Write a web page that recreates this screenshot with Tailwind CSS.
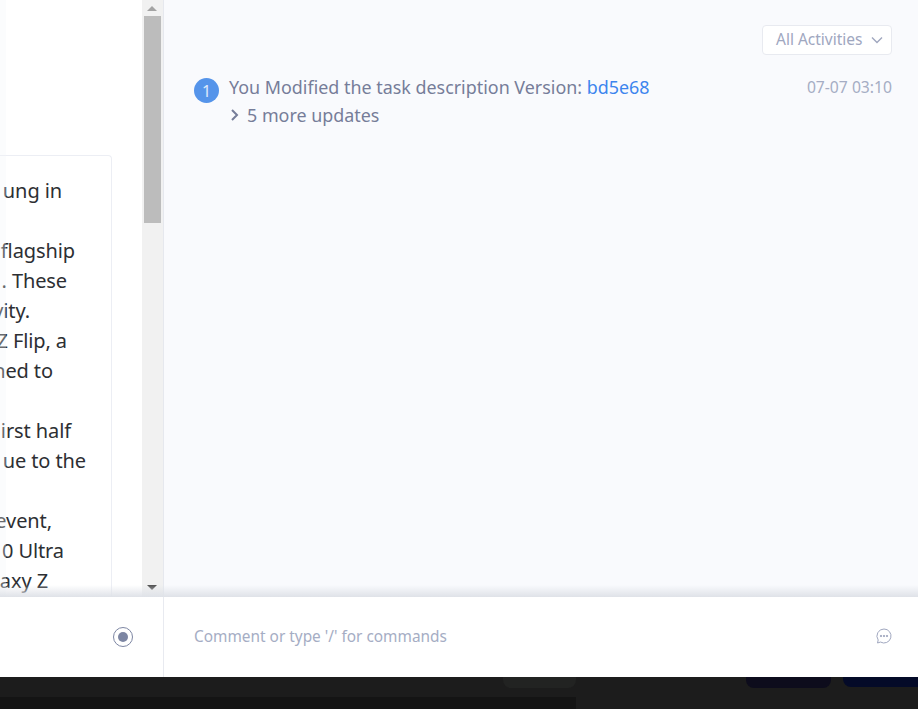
<!DOCTYPE html>
<html lang="en">

<head>
    <meta charset="UTF-8" />
    <title>Task activity</title>
    <script src="https://cdn.jsdelivr.net/npm/@tailwindcss/browser@4"></script>
</head>

<body class="w-[918px] h-[709px] overflow-hidden bg-[#1c1c1c] font-['Noto_Sans','Open_Sans',sans-serif]">
    <div class="h-[677px] flex flex-col">
        <div class="h-[597px] flex relative">
            <!-- left: description -->
            <div class="w-[142px] bg-white pt-[155px] overflow-hidden">
                <div class="w-[112px] h-[442px] border-t border-r border-[#eceef4] rounded-tr overflow-hidden pt-[20px] flex flex-col items-end text-[20px] tracking-[-0.1px] leading-[30px] text-[#2d2f33] whitespace-nowrap">
                    <p class="pr-[49px]">ung in</p>
                    <p class="pr-[36px] mt-[30px]">flagship</p>
                    <p class="pr-[44px]">. These</p>
                    <p class="pr-[81px]">vity.</p>
                    <p class="pr-[44px]">Z Flip, a</p>
                    <p class="pr-[58px]">hed to</p>
                    <p class="pr-[40px] mt-[30px]">irst half</p>
                    <p class="pr-[25px]">ue to the</p>
                    <p class="pr-[59px] mt-[30px]">event,</p>
                    <p class="pr-[47px]">0 Ultra</p>
                    <p class="pr-[63px]">axy Z</p>
                </div>
            </div>
            <!-- scrollbar -->
            <div class="w-[22px] bg-[#f1f1f1] border-r border-[#e6e8ee] flex flex-col items-center pr-[1px]">
                <div class="h-[16px] flex items-center justify-center">
                    <div class="w-0 h-0 border-x-[5px] border-x-transparent border-b-[5px] border-b-[#a3a3a3]"></div>
                </div>
                <div class="w-[17px] h-[207px] bg-[#bcbcbc]"></div>
                <div class="flex-1"></div>
                <div class="h-[16px] mb-[2px] flex items-center justify-center">
                    <div class="w-0 h-0 border-x-[5px] border-x-transparent border-t-[5px] border-t-[#505050]"></div>
                </div>
            </div>
            <!-- right: activity -->
            <div class="flex-1 bg-[#f9fafd] pt-[25px] pl-[30px] pr-[26px]">
                <div class="flex justify-end">
                    <div class="w-[130px] h-[30px] pb-[1px] bg-white border border-[#e8eaf0] rounded flex items-center pl-[13px] gap-[8px] text-[15.500px] text-[#a0a7bf]">
                        <span>All Activities</span>
                        <svg width="12" height="12" viewBox="0 0 12 12" fill="none" stroke="#a0a7bf" stroke-width="1.4">
                            <path d="M1 3.500l5 5 5-5" />
                        </svg>
                    </div>
                </div>
                <div class="mt-[18px] flex">
                    <div class="w-[25px] h-[25px] mt-[5px] rounded-full bg-[#5594ea] text-white/80 text-[16px] flex items-center justify-center">1</div>
                    <div class="ml-[10px] flex-1 text-[17.900px] leading-[28px] text-[#767d99]">
                        <div class="flex justify-between">
                            <p>You Modified the task description Version: <span class="text-[#3d85ee]">bd5e68</span></p>
                            <span class="text-[15.700px] text-[#a5adc4]">07-07 03:10</span>
                        </div>
                        <div class="flex items-center">
                            <svg width="12" height="14" viewBox="0 0 12 14" fill="none" stroke="#767d99" stroke-width="2" class="mr-[6px]">
                                <path d="M3 2l5 5-5 5" />
                            </svg>
                            <span>5 more updates</span>
                        </div>
                    </div>
                </div>
            </div>
            <!-- overlays: tint at the left edge, shadow above the comment bar -->
            <div class="absolute left-0 top-0 bottom-0 w-[6px] bg-[#f3f5fa]/30"></div>
            <div class="absolute left-0 right-0 bottom-0 h-[12px] bg-gradient-to-b from-transparent to-[#dfe2e8]"></div>
        </div>
        <!-- comment bar -->
        <div class="h-[80px] flex bg-white">
            <div class="w-[164px] border-r border-[#e8eaf0] flex items-center justify-end pr-[30px]">
                <div class="w-[20px] h-[20px] rounded-full border border-[#7d86a3] flex items-center justify-center">
                    <div class="w-[10px] h-[10px] rounded-full bg-[#7d86a3]"></div>
                </div>
            </div>
            <div class="flex-1 flex items-center justify-between pl-[30px] pr-[26px]">
                <span class="text-[15.400px] text-[#a5adc4] mb-[1px]">Comment or type '/' for commands</span>
                <svg width="16" height="16" viewBox="0 0 16 16" fill="none" stroke="#a0a7bf" stroke-width="1" class="mb-[3px]">
                    <path d="M8 1a7 7 0 1 1-3.500 13.060L1.500 15l.7-3A7 7 0 0 1 8 1z" />
                    <circle cx="5" cy="8" r=".7" fill="#a0a7bf" />
                    <circle cx="8" cy="8" r=".7" fill="#a0a7bf" />
                    <circle cx="11" cy="8" r=".7" fill="#a0a7bf" />
                </svg>
            </div>
        </div>
    </div>
    <!-- dimmed page behind the panel -->
    <div class="h-[32px] relative">
        <div class="absolute left-[503px] top-0 w-[73px] h-[11px] rounded-b-lg bg-[#222322]"></div>
        <div class="absolute left-[746px] top-0 w-[85px] h-[11px] rounded-b-lg bg-[#0d0c1c]"></div>
        <div class="absolute left-[843px] top-0 w-[75px] h-[10px] rounded-bl-lg bg-[#040a28]"></div>
        <div class="absolute left-0 top-[20px] w-[576px] h-[12px] bg-[#141414]"></div>
    </div>
</body>

</html>
